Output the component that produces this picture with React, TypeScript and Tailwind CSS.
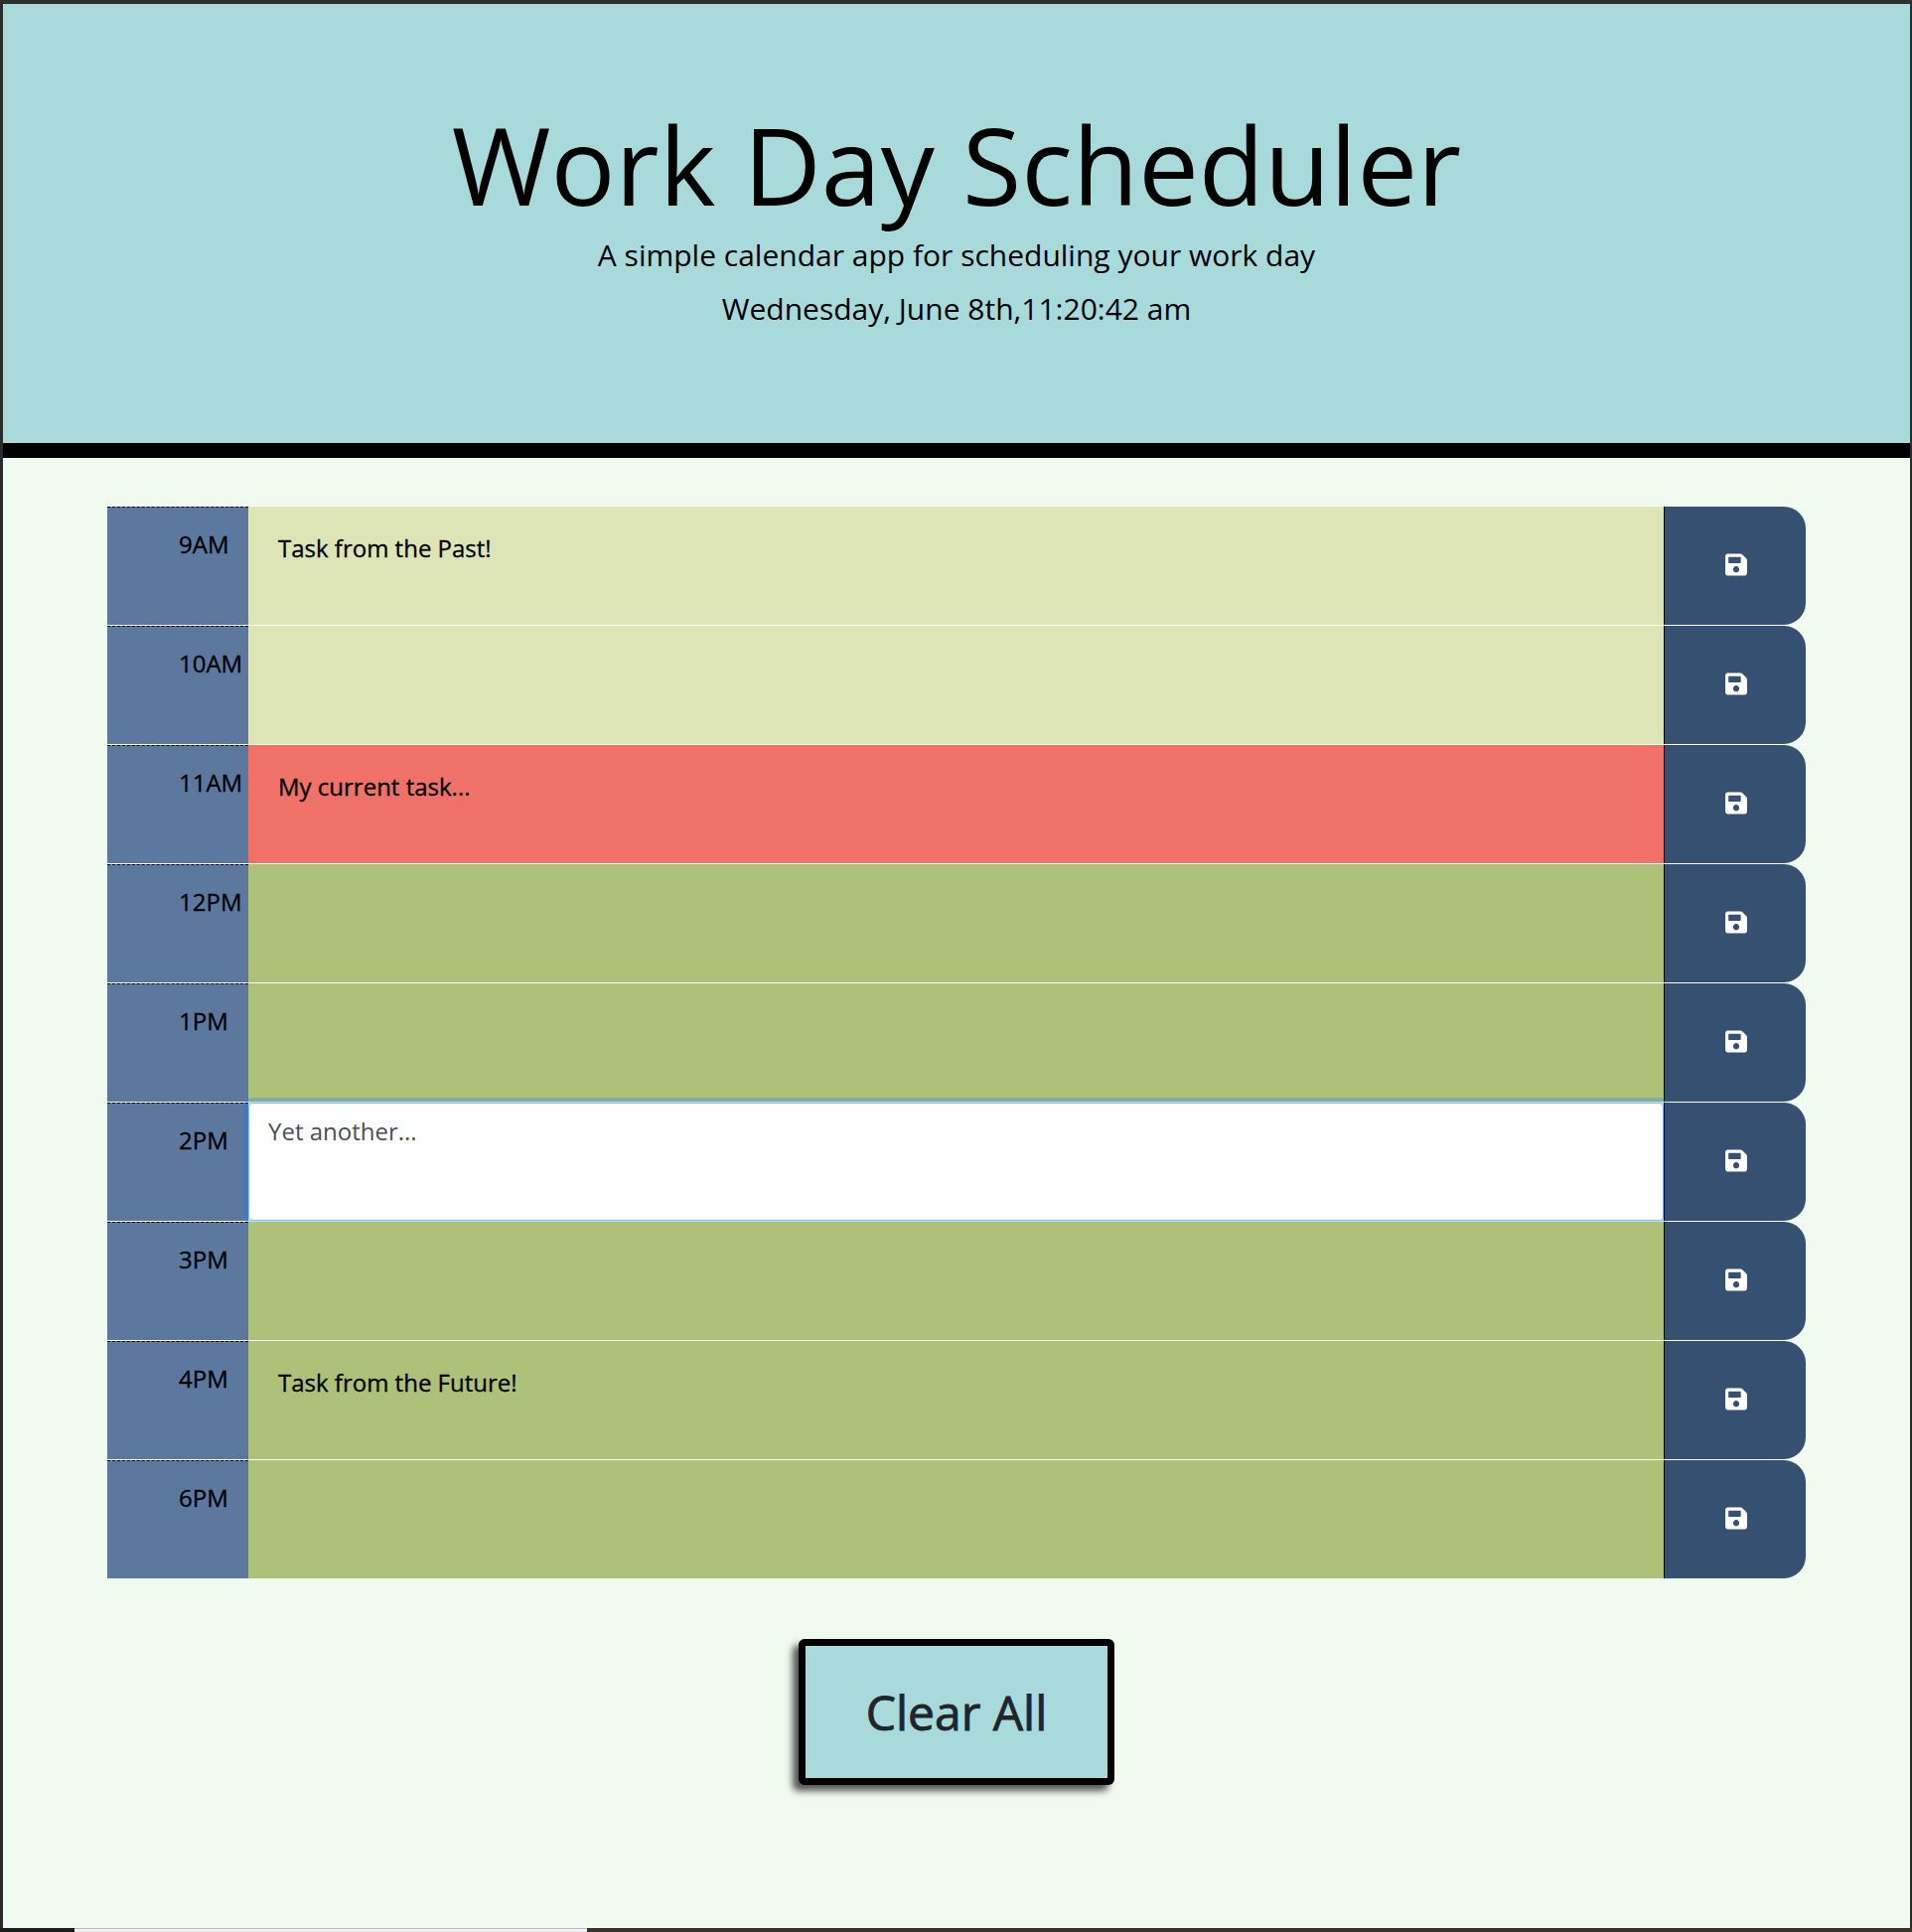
import React from "react";

const font = { fontFamily: '"Open Sans", sans-serif' };

function SaveIcon() {
  return (
    <svg width="22" height="25" viewBox="0 0 448 512" fill="#fff" aria-hidden="true">
      <path d="M433.941 129.941l-83.882-83.882A48 48 0 0 0 316.118 32H48C21.49 32 0 53.49 0 80v352c0 26.51 21.49 48 48 48h352c26.51 0 48-21.49 48-48V163.882a48 48 0 0 0-14.059-33.941zM224 416c-35.346 0-64-28.654-64-64 0-35.346 28.654-64 64-64s64 28.654 64 64c0 35.346-28.654 64-64 64zm96-304.52V212c0 6.627-5.373 12-12 12H76c-6.627 0-12-5.373-12-12V108c0-6.627 5.373-12 12-12h228.52c3.183 0 6.235 1.264 8.485 3.515l3.48 3.48A11.996 11.996 0 0 1 320 111.48z" />
    </svg>
  );
}

type Row = { hour: string; bg: string; text?: string; focus?: boolean };
const rows: Row[] = [
  { hour: "9AM", bg: "bg-[#dde5b6]", text: "Task from the Past!" },
  { hour: "10AM", bg: "bg-[#dde5b6]" },
  { hour: "11AM", bg: "bg-[#f07167]", text: "My current task..." },
  { hour: "12PM", bg: "bg-[#adc178]" },
  { hour: "1PM", bg: "bg-[#adc178]" },
  { hour: "2PM", bg: "bg-white", text: "Yet another...", focus: true },
  { hour: "3PM", bg: "bg-[#adc178]" },
  { hour: "4PM", bg: "bg-[#adc178]", text: "Task from the Future!" },
  { hour: "6PM", bg: "bg-[#adc178]" },
];

export default function App() {
  return (
    <div style={font} className="h-[1945px] w-[1925px] flex flex-col overflow-hidden bg-[#2b2b2d]">
      <div className="h-1 shrink-0 bg-[#2e2e2e]" />
      <div className="flex-1 min-h-0 ml-[3px] mr-[2px] flex flex-col bg-[#f1faee]">
        <header className="h-[457px] shrink-0 bg-[#a8dadc] border-b-[15px] border-black flex flex-col items-center text-black">
          <h1 className="mt-[98px] text-[108px] leading-[127px] font-normal">Work Day Scheduler</h1>
          <p className="mt-[1px] text-[30px] leading-[54px]">A simple calendar app for scheduling your work day</p>
          <p className="text-[30px] leading-[54px]">Wednesday, June 8th,11:20:42 am</p>
        </header>
        <main className="mt-[48px] ml-[105px] w-[1710px]">
          {rows.map((r) => (
            <div key={r.hour} className="flex h-[120px] border-t border-white">
              <div className="w-[142px] shrink-0 bg-[#5c789f] border-t border-dashed border-black pl-[72px] pt-[19px] text-[24px] leading-[36px] text-black [-webkit-text-stroke:0.3px_#000]">
                {r.hour}
              </div>
              <div
                className={
                  r.focus
                    ? "flex-1 bg-white border border-[#80bdff] rounded-[4px] shadow-[0_0_0_5px_rgba(0,123,255,0.25)] pl-[19px] pt-[10px] text-[24px] leading-[36px] text-[#495057]"
                    : `flex-1 ${r.bg} pl-[30px] pt-[24px] text-[24px] leading-[36px] text-black [-webkit-text-stroke:0.3px_#000]`
                }
              >
                {r.text}
              </div>
              <button className="w-[143px] shrink-0 bg-[#355070] border-l border-black rounded-r-[22px] flex items-center justify-center pl-[2px] pb-[2px]">
                <SaveIcon />
              </button>
            </div>
          ))}
        </main>
        <div className="mt-[61px] flex justify-center">
          <button className="w-[318px] h-[147px] bg-[#a8dadc] border-[7px] border-black rounded-[6px] shadow-[-6px_6px_7px_#555] text-[48px] text-[#212529] [-webkit-text-stroke:0.9px_#212529]">
            Clear All
          </button>
        </div>
      </div>
      <div className="h-1 shrink-0 flex">
        <div className="w-[75px] bg-[#1c1c1c]" />
        <div className="w-[516px] bg-[#f0f0f0] border-t border-[#bbbbbb]" />
        <div className="flex-1 bg-[#3a3428]" />
      </div>
    </div>
  );
}
